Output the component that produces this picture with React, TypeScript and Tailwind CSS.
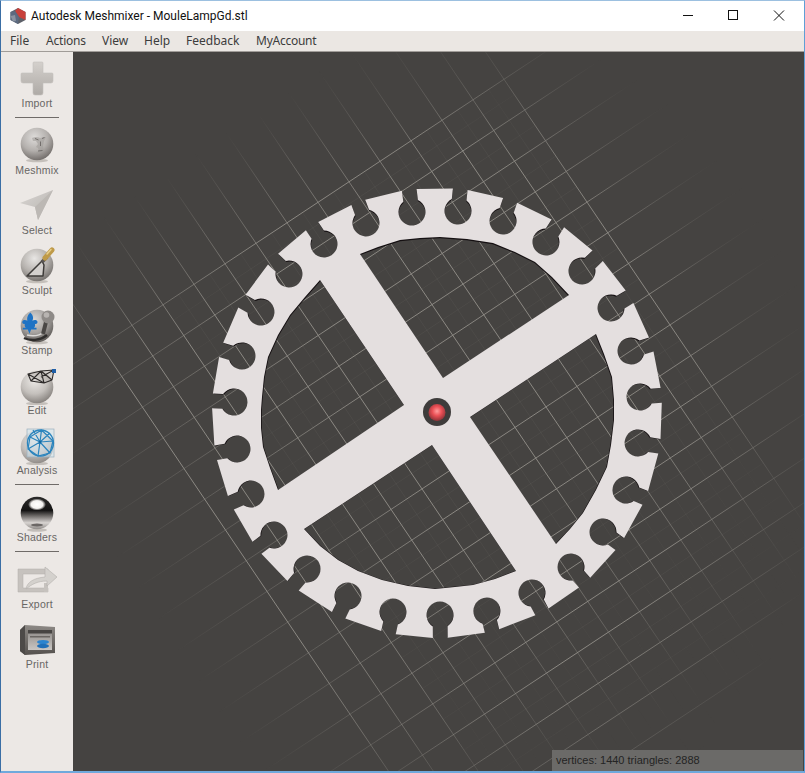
import React from "react";

const HOLES: [number, number][] = [
  [412,212],[458,211],[503,221],[546,242],[582,271],[611,308],[631,351],[640,397],[638,443],
  [626,490],[603,532],[571,567],[532,593],[487,611],[440,615],[393,612],[348,596],[307,569],
  [274,535],[251,494],[237,449],[234,402],[242,356],[261,312],[289,274],[324,244],[366,223],
];
const OPENINGS: [number, number][][] = [
  [[360,254],[378,247],[400,240],[420,238],[440,237],[467,239],[493,243],[515,252],[535,262],[552,277],[569,295],[443,378]],
  [[596,334],[604,354],[612,377],[614,400],[614,420],[611,445],[607,467],[596,490],[583,513],[570,529],[556,544],[470,417]],
  [[516,571],[495,579],[473,585],[455,587],[435,589],[408,586],[382,580],[358,571],[338,560],[320,546],[304,529],[432,445]],
  [[278,490],[270,468],[263,447],[261,428],[261,410],[262,397],[264,377],[268,357],[278,335],[290,315],[305,297],[320,280],[404,405]],
];
const f = (n: number) => n.toFixed(1);

function wheelPath() {
  const cx = 437, cy = 413, ro = 225, hr = 13.5, w = 7.4;
  let d = "";
  HOLES.forEach(([hx, hy], k) => {
    const dx = hx - cx, dy = hy - cy, l = Math.hypot(dx, dy);
    const ux = dx / l, uy = dy / l, tx = -uy, ty = ux;
    const so = Math.sqrt(ro * ro - w * w), sh = Math.sqrt(hr * hr - w * w);
    const A = [cx + so * ux - w * tx, cy + so * uy - w * ty];
    const B = [hx + sh * ux - w * tx, hy + sh * uy - w * ty];
    const C = [hx + sh * ux + w * tx, hy + sh * uy + w * ty];
    const D = [cx + so * ux + w * tx, cy + so * uy + w * ty];
    d += `${k === 0 ? "M" : "L"}${f(A[0])} ${f(A[1])}L${f(B[0])} ${f(B[1])}A${hr} ${hr} 0 1 0 ${f(C[0])} ${f(C[1])}L${f(D[0])} ${f(D[1])}`;
  });
  d += "Z";
  OPENINGS.forEach((o) => {
    d += "M" + o.map((p) => `${p[0]} ${p[1]}`).join("L") + "Z";
  });
  return d;
}

const A = { x: 20.75, y: 30.7 };
const B = { x: 31, y: -20.5 };
const O = { x: 504, y: 79.3 };
const P = (i: number, j: number) => ({ x: O.x + i * A.x + j * B.x, y: O.y + i * A.y + j * B.y });

function Grid() {
  const majorA: number[] = [], majorB: number[] = [], minorA: number[] = [], minorB: number[] = [];
  for (let j = -13; j <= 0; j++) majorA.push(j);
  for (let i = 0; i <= 22; i++) majorB.push(i);
  for (let j = -10.5; j <= 0; j++) minorA.push(j);
  for (let i = 0.5; i <= 16; i++) minorB.push(i);
  const ga0 = P(-3, 0), ga1 = P(17, 0);
  const gb0 = P(0, -15.8), gb1 = P(0, 4);
  const c = "#8f8c86";
  return (
    <g mask="url(#gridFade)">
      <defs>
        <radialGradient id="fadeR" gradientUnits="userSpaceOnUse" cx="395" cy="440" r="435">
          <stop offset="0.68" stopColor="#fff" />
          <stop offset="1" stopColor="#000" />
        </radialGradient>
        <mask id="gridFade" maskUnits="userSpaceOnUse" x="73" y="52" width="731" height="719">
          <rect x="73" y="52" width="731" height="719" fill="url(#fadeR)" />
        </mask>
        <linearGradient id="gradA" gradientUnits="userSpaceOnUse" x1={ga0.x} y1={ga0.y} x2={ga1.x} y2={ga1.y}>
          <stop offset="0" stopColor={c} stopOpacity="0" />
          <stop offset="0.2" stopColor={c} stopOpacity="0.95" />
          <stop offset="0.62" stopColor={c} stopOpacity="0.95" />
          <stop offset="1" stopColor={c} stopOpacity="0.05" />
        </linearGradient>
        <linearGradient id="gradB" gradientUnits="userSpaceOnUse" x1={gb0.x} y1={gb0.y} x2={gb1.x} y2={gb1.y}>
          <stop offset="0" stopColor={c} stopOpacity="0" />
          <stop offset="0.2" stopColor={c} stopOpacity="0.45" />
          <stop offset="0.42" stopColor={c} stopOpacity="0.95" />
          <stop offset="0.8" stopColor={c} stopOpacity="0.85" />
          <stop offset="1" stopColor={c} stopOpacity="0" />
        </linearGradient>
      </defs>
      {majorA.map((j) => {
        const s = P(-3, j), e = P(22, j);
        return <line key={"a" + j} x1={s.x} y1={s.y} x2={e.x} y2={e.y} stroke="url(#gradA)" strokeWidth={1} />;
      })}
      {majorB.map((i) => {
        const s = P(i, -16), e = P(i, 4);
        return <line key={"b" + i} x1={s.x} y1={s.y} x2={e.x} y2={e.y} stroke="url(#gradB)" strokeWidth={1} />;
      })}
      {minorA.map((j) => {
        const s = P(0, j), e = P(20, j);
        return <line key={"ma" + j} x1={s.x} y1={s.y} x2={e.x} y2={e.y} stroke="url(#gradA)" strokeWidth={0.7} opacity={0.16} />;
      })}
      {minorB.map((i) => {
        const s = P(i, -11), e = P(i, 0);
        return <line key={"mb" + i} x1={s.x} y1={s.y} x2={e.x} y2={e.y} stroke="url(#gradB)" strokeWidth={0.7} opacity={0.16} />;
      })}
    </g>
  );
}

function Viewport() {
  const d = wheelPath();
  return (
    <svg viewBox="73 52 731 719" className="block h-full w-full">
      <defs>
        <radialGradient id="led" cx="0.5" cy="0.42" r="0.55">
          <stop offset="0" stopColor="#ff9c9c" />
          <stop offset="0.5" stopColor="#ea4f55" />
          <stop offset="1" stopColor="#97353a" />
        </radialGradient>
      </defs>
      <Grid />
      <path d={d} fillRule="evenodd" fill="#151012" transform="translate(437 413.4) scale(0.9955) translate(-437 -413)" />
      <path d={d} fillRule="evenodd" fill="#e4dfdf" />
      <circle cx="437" cy="412" r="14" fill="#3e3c3b" />
      <circle cx="437" cy="412.5" r="8.5" fill="url(#led)" />
    </svg>
  );
}

function Sphere({ id, cy = 19, light = "#e8e6e4", mid = "#b5b1ad", dark = "#6e6a67" }: { id: string; cy?: number; light?: string; mid?: string; dark?: string }) {
  return (
    <>
      <defs>
        <radialGradient id={id} cx="0.42" cy="0.3" r="0.75">
          <stop offset="0" stopColor={light} />
          <stop offset="0.55" stopColor={mid} />
          <stop offset="1" stopColor={dark} />
        </radialGradient>
      </defs>
      <ellipse cx="20" cy={cy + 16.5} rx="11" ry="1.8" fill="#c4bfba" />
      <circle cx="20" cy={cy} r="16.3" fill={`url(#${id})`} />
    </>
  );
}

const IconImport = () => (
  <svg width="40" height="40" viewBox="0 0 40 40">
    <defs>
      <linearGradient id="imp" x1="0" y1="0" x2="0" y2="1">
        <stop offset="0" stopColor="#d4d0cc" />
        <stop offset="1" stopColor="#aeaaa6" />
      </linearGradient>
    </defs>
    <path d="M17 4h8a1 1 0 0 1 1 1v10h9a1 1 0 0 1 1 1v7a2 2 0 0 1-2 2H26v10a2 2 0 0 1-2 2h-6a2 2 0 0 1-2-2V25H6a2 2 0 0 1-2-2v-7a1 1 0 0 1 1-1h11V5a1 1 0 0 1 1-1z" fill="url(#imp)" stroke="#c4c0bc" strokeWidth="0.6" />
  </svg>
);
const IconMeshmix = () => (
  <svg width="40" height="40" viewBox="0 0 40 40">
    <Sphere id="s-mm" light="#dedcda" mid="#b3afac" dark="#6a6562" />
    <path d="M15 13c3-1.500 6-1 8 0l6-1-2 4-1 5 1 5-5 3-3-1 3-2-1-3-2-1 2-3-2-3-3 0z" fill="#a09c99" opacity="0.6" />
    <path d="M18 13.500l3.500 1.500M25 13.500l2.500-1M23.500 16.500v4.500M21 26l4.500-.5" stroke="#6b6764" strokeWidth="0.9" fill="none" />
  </svg>
);
const IconSelect = () => (
  <svg width="40" height="40" viewBox="0 0 40 40">
    <defs>
      <linearGradient id="sel" x1="0" y1="0" x2="1" y2="1">
        <stop offset="0" stopColor="#d9d6d3" />
        <stop offset="1" stopColor="#b5b1ad" />
      </linearGradient>
    </defs>
    <path d="M36 5 3 18 18 22 21 35z" fill="url(#sel)" />
    <path d="M36 5 18 22 21 35z" fill="#bcb8b4" />
  </svg>
);
const IconSculpt = () => (
  <svg width="40" height="40" viewBox="0 0 40 40">
    <Sphere id="s-sc" cy={20} />
    <path d="M25 16 10 31 26 31 27 20z" fill="#d3d0cd" stroke="#3e3b39" strokeWidth="1.500" strokeLinejoin="round" />
    <path d="M25 17 30 12" stroke="#5a5653" strokeWidth="3.500" />
    <path d="M28 13 35 5" stroke="#bf9a48" strokeWidth="5" strokeLinecap="round" />
    <path d="M30 9 34 4.500" stroke="#e8d08d" strokeWidth="1.500" strokeLinecap="round" />
  </svg>
);
const IconStamp = () => (
  <svg width="40" height="40" viewBox="0 0 40 40">
    <Sphere id="s-st" cy={21} light="#d8d6d4" mid="#a5a19e" dark="#55514e" />
    <g transform="translate(2.500 5) scale(0.83)">
      <path d="M13 3c4 4 4 7 2.500 10 2-1.500 5-1.500 6 .5 1 2.500-1.500 4-3 3 .5 1 .5 3.500-1 5h3v2h-6.500c-1 2.500-1.500 4-2 5-.5-1-1-2.500-2-5H4v-2h3.500c-1.500-1.500-1.500-4-1-5-1.500 1-4 -.5-3-3 1-2 4-2 6-.5C9 10 9 7 13 3z" fill="#1f73c4" />
    </g>
    <path d="M7 33c6 3 16 3 23-3" stroke="#2f2d2c" strokeWidth="2.500" fill="none" />
    <path d="M10 30c6 1.500 12 1 17-3" stroke="#dcdad8" strokeWidth="1.500" fill="none" />
    <path d="M29 17 26 29" stroke="#4a4745" strokeWidth="4" />
    <circle cx="31" cy="12" r="6.500" fill="#8e8a87" />
    <circle cx="29.500" cy="10" r="2.800" fill="#b8b4b1" />
  </svg>
);
const IconEdit = () => (
  <svg width="40" height="40" viewBox="0 0 40 40">
    <Sphere id="s-ed" cy={22} light="#ece9e6" mid="#c4c0bc" dark="#7f7a76" />
    <path d="M11 9 24 6 37 5 35 15 27 18 14 16zM11 9 27 18M24 6 14 16M24 6 27 18M24 6 35 15M37 5 24 12" fill="#b3afab" fillOpacity="0.4" stroke="#2d2a29" strokeWidth="1.100" strokeLinejoin="round" />
    <rect x="35" y="4" width="4" height="4" fill="#1f5fa8" />
  </svg>
);
const IconAnalysis = () => (
  <svg width="40" height="40" viewBox="0 0 40 40">
    <Sphere id="s-an" cy={22} light="#e8e5e2" mid="#c2bebb" dark="#8a8581" />
    <rect x="10" y="4" width="27" height="28" fill="#cfe3ef" fillOpacity="0.55" stroke="#9bb0bd" strokeWidth="0.7" />
    <circle cx="23.500" cy="18" r="13" fill="none" stroke="#2b84bd" strokeWidth="1.300" />
    <path d="M24.500 5 13 12 11 24 21 31 33 28 36 16zM24.500 5 23 17 13 12M23 17 11 24M23 17 21 31M23 17 33 28M23 17 36 16M24.500 5 36 16M16 5 23 17M33 8 23 17" fill="none" stroke="#2b84bd" strokeWidth="1.200" strokeLinejoin="round" />
    <circle cx="23" cy="17" r="1.300" fill="#176a9f" />
  </svg>
);
const IconShaders = () => (
  <svg width="40" height="40" viewBox="0 0 40 40">
    <defs>
      <linearGradient id="chrome" x1="0" y1="0" x2="0" y2="1">
        <stop offset="0" stopColor="#2b2a29" />
        <stop offset="0.42" stopColor="#141313" />
        <stop offset="0.56" stopColor="#5e5b59" />
        <stop offset="0.8" stopColor="#d8d4d1" />
        <stop offset="1" stopColor="#8e8a87" />
      </linearGradient>
      <radialGradient id="spec" cx="0.5" cy="0.5" r="0.5">
        <stop offset="0" stopColor="#ffffff" />
        <stop offset="0.65" stopColor="#f4f2f0" />
        <stop offset="1" stopColor="#f4f2f0" stopOpacity="0" />
      </radialGradient>
    </defs>
    <ellipse cx="20" cy="38" rx="10" ry="1.800" fill="#c3beb9" />
    <circle cx="20" cy="21" r="16.300" fill="url(#chrome)" />
    <ellipse cx="20" cy="12.500" rx="9" ry="6" fill="url(#spec)" />
    <ellipse cx="20" cy="33" rx="6" ry="1.500" fill="#6b6765" />
  </svg>
);
const IconExport = () => (
  <svg width="40" height="40" viewBox="0 0 40 40">
    <path d="M1 10h30v5H6v14h25v4H1z" fill="#c6c2be" stroke="#b0aca8" strokeWidth="0.5" />
    <path d="M31 24v9h-4v-9z" fill="#c6c2be" />
    <path d="M9 30c1-7 8-11 19-12V8l12 10-10 9v-5c-9 0-15 3-21 8z" fill="#d4d1cd" stroke="#b4b0ac" strokeWidth="0.6" />
  </svg>
);
const IconPrint = () => (
  <svg width="40" height="40" viewBox="0 0 40 40">
    <defs>
      <linearGradient id="pr" x1="0" y1="0" x2="0" y2="1">
        <stop offset="0" stopColor="#8d8985" />
        <stop offset="1" stopColor="#55514e" />
      </linearGradient>
      <linearGradient id="prIn" x1="0" y1="0" x2="0" y2="1">
        <stop offset="0" stopColor="#8e8a87" />
        <stop offset="1" stopColor="#c9c6c3" />
      </linearGradient>
    </defs>
    <path d="M8 6 38 8v26l-30 2-5-4V11z" fill="url(#pr)" />
    <path d="M3 11 8 6v30l-5-4z" fill="#4d4a48" />
    <rect x="11" y="11" width="24" height="20" fill="url(#prIn)" />
    <rect x="11" y="11" width="24" height="3.500" fill="#474442" />
    <rect x="13" y="17" width="20" height="1.500" fill="#6a6663" />
    <ellipse cx="26" cy="23" rx="6" ry="2" fill="#2a84cf" />
    <ellipse cx="26" cy="27" rx="6" ry="2.200" fill="#1f6fb8" />
  </svg>
);

function Label({ children }: { children: React.ReactNode }) {
  return <div className="-mt-[2px] h-[14px] whitespace-nowrap text-[10.5px] leading-[14px] tracking-[0.2px] text-[#686664]">{children}</div>;
}
function Tool({ label, children }: { label: string; children: React.ReactNode }) {
  return (
    <div className="flex h-[60px] flex-col items-center pt-2">
      <div className="h-10 w-10">{children}</div>
      <Label>{label}</Label>
    </div>
  );
}
function Divider() {
  return (
    <div className="flex h-[7px] items-end justify-center">
      <div className="h-px w-11 translate-y-px bg-[#6f6b68]" />
    </div>
  );
}

export default function App() {
  return (
    <div
      className="flex h-[773px] w-[805px] flex-col overflow-hidden border-t border-r border-b-2 border-l border-t-[#9cc0e0] border-r-[#5f9fd6] border-b-[#6fa9dc] border-l-[#3a6ea5] bg-white"
      style={{ fontFamily: '"Noto Sans", sans-serif' }}
    >
      <div className="flex h-[30px] items-center bg-white">
        <svg width="18" height="18" viewBox="0 0 18 18" className="ml-[8px]">
          <path d="M9 1 16.500 5 16.500 13 9 17 1.500 13 1.500 5z" fill="#5d6169" />
          <path d="M9 1 16.500 5 16.500 13 10 10 6 4z" fill="#c9403a" />
          <path d="M1.500 5 6 4 10 10 9 17 1.500 13z" fill="#5c6a80" />
          <path d="M1.500 9 6 8 7 14 4 14.500z" fill="#a8adb5" opacity="0.6" />
        </svg>
        <span className="ml-[4px] whitespace-nowrap text-[12px] leading-none text-[#111]" style={{ fontFamily: 'Roboto, sans-serif' }}>Autodesk Meshmixer - MouleLampGd.stl</span>
        <div className="ml-auto flex h-full items-center">
          <svg width="46" height="30" viewBox="0 0 46 30">
            <path d="M17 14.500h10" stroke="#111" strokeWidth="1" />
          </svg>
          <svg width="46" height="30" viewBox="0 0 46 30">
            <rect x="16.500" y="9.500" width="9" height="9" fill="none" stroke="#111" strokeWidth="1" />
          </svg>
          <svg width="46" height="30" viewBox="0 0 46 30">
            <path d="M16 9.500 26 19.500M26 9.500 16 19.500" stroke="#111" strokeWidth="1" />
          </svg>
        </div>
      </div>
      <div className="flex h-[21px] items-center border-b border-[#a09c98] bg-[#ebe7e3] pl-[9px] text-[12px] leading-none text-[#3c3c3c]">
        <span className="w-[36px]">File</span>
        <span className="w-[56px] tracking-[-0.2px]">Actions</span>
        <span className="w-[42px]">View</span>
        <span className="w-[42px]">Help</span>
        <span className="w-[70px]">Feedback</span>
        <span className="tracking-[-0.25px]">MyAccount</span>
      </div>
      <div className="flex min-h-0 flex-1">
        <div className="w-[72px] shrink-0 bg-[#ece8e5]" style={{ fontFamily: '"Liberation Sans", sans-serif' }}>
          <div className="flex h-[58px] flex-col items-center pt-[6px]">
            <IconImport />
            <Label>Import</Label>
          </div>
          <Divider />
          <Tool label="Meshmix"><IconMeshmix /></Tool>
          <Tool label="Select"><IconSelect /></Tool>
          <Tool label="Sculpt"><IconSculpt /></Tool>
          <Tool label="Stamp"><IconStamp /></Tool>
          <Tool label="Edit"><IconEdit /></Tool>
          <Tool label="Analysis"><IconAnalysis /></Tool>
          <Divider />
          <Tool label="Shaders"><IconShaders /></Tool>
          <Divider />
          <Tool label="Export"><IconExport /></Tool>
          <Tool label="Print"><IconPrint /></Tool>
        </div>
        <div className="relative min-w-0 flex-1 bg-[#454341]">
          <Viewport />
          <div
            className="absolute right-[1px] bottom-0 flex h-[21px] w-[251px] items-center bg-[#6b6a68] pl-[4px] text-[11px] leading-none text-[#242424]"
            style={{ fontFamily: '"Liberation Sans", sans-serif' }}
          >
            vertices: 1440 triangles: 2888
          </div>
        </div>
      </div>
    </div>
  );
}
